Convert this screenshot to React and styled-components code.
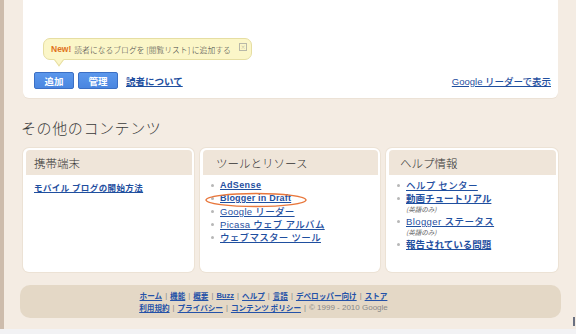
import React from "react";
import styled, { createGlobalStyle } from "styled-components";

const Global = createGlobalStyle`
  html, body { margin: 0; padding: 0; }
  body { width: 576px; height: 334px; overflow: hidden; background: #f4ece3;
    font-family: "Noto Sans CJK JP", "Liberation Sans", sans-serif; }
`;

const Page = styled.div`
  display: flex;
  width: 576px;
  height: 334px;
  background: #f4ece3;
  position: relative;
`;

const LeftStrip = styled.div`
  width: 4px;
  flex: 0 0 4px;
  height: 329px;
  background: #cdbcac;
`;

const Main = styled.div`
  flex: 1;
  display: flex;
  flex-direction: column;
  padding: 0 18px 0 19px;
`;

const TopPanel = styled.div`
  height: 98px;
  box-sizing: border-box;
  background: #fff;
  border-radius: 0 0 6px 6px;
  padding: 38px 7px 0 11px;
  display: flex;
  flex-direction: column;
  box-shadow: 0 1px 0 #ece2d6;
`;

const Tip = styled.div`
  position: relative;
  align-self: flex-start;
  margin-left: 9px;
  width: 209px;
  height: 22px;
  box-sizing: border-box;
  background: #fbf6c8;
  border: 1px solid #e6dea2;
  border-radius: 7px;
  display: flex;
  align-items: center;
  padding: 0 0 0 7px;
  font-size: 7.8px;
  font-weight: 300;
  color: #444;
  white-space: nowrap;
  &::after {
    content: "";
    position: absolute;
    left: 11px;
    bottom: -5px;
    width: 7px;
    height: 7px;
    background: #fbf6c8;
    border-right: 1px solid #e6dea2;
    border-bottom: 1px solid #e6dea2;
    transform: rotate(45deg) skew(8deg, 8deg);
  }
`;

const NewTag = styled.span`
  color: #e0731c;
  font-weight: bold;
  font-family: "Liberation Sans", sans-serif;
  font-size: 8.5px;
  margin-right: 3px;
`;

const TipClose = styled.span`
  position: absolute;
  right: 4px;
  top: 4px;
  width: 6px;
  height: 6px;
  border: 1px solid #b8b8a8;
  color: #a0a090;
  font-size: 6px;
  line-height: 6px;
  text-align: center;
  font-family: "DejaVu Sans", sans-serif;
`;

const ActionRow = styled.div`
  margin-top: 12px;
  display: flex;
  align-items: center;
  gap: 4px;
`;

const BlueButton = styled.button`
  width: 40px;
  height: 17px;
  padding: 0;
  border: 1px solid #3b6fc4;
  border-radius: 2px;
  background: linear-gradient(#5b97ec, #4a86e0);
  color: #fff;
  font-weight: bold;
  font-size: 9.5px;
  font-family: "Noto Sans CJK JP", sans-serif;
`;

const LinkA = styled.a`
  color: ${(p) => p.$color || "#1f4f9f"};
  text-decoration: underline;
  font-size: ${(p) => p.$size || "9.5px"};
  font-weight: ${(p) => p.$weight || 500};
  font-family: ${(p) => (p.$latin ? '"Liberation Sans", "Noto Sans CJK JP", sans-serif' : '"Noto Sans CJK JP", sans-serif')};
  letter-spacing: ${(p) => p.$ls || "0"};
  cursor: pointer;
`;

const ActionLink = styled(LinkA)`
  margin-left: 4px;
`;

const Spacer = styled.div`
  flex: 1;
`;

const Heading = styled.h2`
  margin: 20px 0 0 -2px;
  font-size: 15px;
  line-height: 20px;
  font-weight: 300;
  letter-spacing: 0.6px;
  color: #3a3a3a;
`;

const Cards = styled.div`
  margin-top: 10px;
  display: grid;
  grid-template-columns: 171px 180px 172px;
  column-gap: 6px;
  height: 124px;
`;

const Card = styled.div`
  background: #fff;
  border-radius: 6px;
  padding: 2px 2px 0 3px;
  box-sizing: border-box;
  box-shadow: 0 0 0 1px #ece2d5;
  position: relative;
`;

const CardHead = styled.div`
  height: 25px;
  background: #efe5d9;
  border-radius: 4px 4px 0 0;
  display: flex;
  align-items: center;
  padding-left: ${(p) => p.$pad || "8px"};
  font-size: 11.5px;
  font-weight: 300;
  color: #333;
`;

const CardBody = styled.div`
  padding: 6px 0 0 8px;
  font-size: 9px;
  line-height: 13px;
`;

const List = styled.ul`
  list-style: none;
  margin: 0;
  padding: 4px 0 0 8px;
`;

const Item = styled.li`
  display: flex;
  align-items: flex-start;
  line-height: 13px;
  &::before {
    content: "";
    width: 3px;
    height: 3px;
    border-radius: 50%;
    background: #b7b7b7;
    margin: 5px 6px 0 0;
    flex: 0 0 3px;
  }
`;

const ItemText = styled.div`
  display: flex;
  flex-direction: column;
`;

const Note = styled.span`
  font-size: 6.5px;
  line-height: 8px;
  font-style: italic;
  color: #555;
  margin-bottom: 2px;
`;

const Ellipse = styled.svg`
  position: absolute;
  left: 4px;
  top: 44px;
  pointer-events: none;
`;

const Footer = styled.div`
  margin-top: 13px;
  height: 33px;
  background: #e4d8c6;
  border-radius: 10px;
  margin-left: -3px;
  margin-right: -3px;
  display: flex;
  flex-direction: column;
  align-items: center;
  justify-content: center;
  padding-right: 54px;
`;

const FootLine = styled.div`
  display: flex;
  align-items: center;
  line-height: 12px;
  white-space: nowrap;
`;

const Sep = styled.span`
  color: #888;
  font-size: 7.5px;
  margin: 0 3px;
  font-family: "Liberation Sans", sans-serif;
`;

const Copy = styled.span`
  color: #888;
  font-size: 8px;
  font-family: "Liberation Sans", sans-serif;
`;

const BottomStrip = styled.div`
  position: absolute;
  left: 0;
  right: 0;
  bottom: 0;
  height: 5px;
  background: #f2f2f4;
`;

const Mark = styled.div`
  position: absolute;
  right: 1px;
  top: 317px;
  width: 2px;
  height: 9px;
  background: #6a7080;
`;

const FL = ({ children, latin }) => (
  <LinkA $size="7.6px" $weight={700} $latin={latin} $color="#2452a8">{children}</LinkA>
);

export default function App() {
  const foot1 = ["ホーム", "機能", "概要", "Buzz", "ヘルプ", "言語", "デベロッパー向け", "ストア"];
  const foot2 = ["利用規約", "プライバシー", "コンテンツ ポリシー"];
  return (
    <Page>
      <Global />
      <LeftStrip />
      <Main>
        <TopPanel>
          <Tip>
            <NewTag>New!</NewTag>
            読者になるブログを [閲覧リスト] に追加する
            <TipClose>×</TipClose>
          </Tip>
          <ActionRow>
            <BlueButton>追加</BlueButton>
            <BlueButton>管理</BlueButton>
            <ActionLink $weight={700}>読者について</ActionLink>
            <Spacer />
            <LinkA $latin $size="9.5px" $weight={500}>Google リーダーで表示</LinkA>
          </ActionRow>
        </TopPanel>
        <Heading>その他のコンテンツ</Heading>
        <Cards>
          <Card>
            <CardHead>携帯端末</CardHead>
            <CardBody>
              <LinkA $size="8.5px" $weight={700} $ls="0.4px">モバイル ブログの開始方法</LinkA>
            </CardBody>
          </Card>
          <Card>
            <CardHead $pad="13px">ツールとリソース</CardHead>
            <List>
              <Item><LinkA $latin $size="9px" $weight={700} $ls="0.4px">AdSense</LinkA></Item>
              <Item><LinkA $latin $size="9px" $weight={700} $ls="0.2px">Blogger in Draft</LinkA></Item>
              <Item><LinkA $latin $size="9.5px" $ls="0.3px">Google リーダー</LinkA></Item>
              <Item><LinkA $latin $size="9.5px" $ls="0.3px">Picasa ウェブ アルバム</LinkA></Item>
              <Item><LinkA $latin $size="9.5px" $ls="0.3px">ウェブマスター ツール</LinkA></Item>
            </List>
            <Ellipse width="104" height="16" viewBox="0 0 104 16">
              <ellipse cx="52" cy="8" rx="50" ry="6.5" fill="none" stroke="#e8773c" strokeWidth="1.4" />
            </Ellipse>
          </Card>
          <Card>
            <CardHead $pad="11px">ヘルプ情報</CardHead>
            <List>
              <Item><LinkA $size="9.5px" $ls="0.4px">ヘルプ センター</LinkA></Item>
              <Item>
                <ItemText>
                  <LinkA $size="9.5px" $weight={700}>動画チュートリアル</LinkA>
                  <Note>(英語のみ)</Note>
                </ItemText>
              </Item>
              <Item>
                <ItemText>
                  <LinkA $latin $size="9.5px" $ls="0.4px">Blogger ステータス</LinkA>
                  <Note>(英語のみ)</Note>
                </ItemText>
              </Item>
              <Item><LinkA $size="9.5px" $weight={700}>報告されている問題</LinkA></Item>
            </List>
          </Card>
        </Cards>
        <Footer>
          <FootLine>
            {foot1.map((t, i) => (
              <React.Fragment key={t}>
                {i > 0 && <Sep>|</Sep>}
                <FL latin={t === "Buzz"}>{t}</FL>
              </React.Fragment>
            ))}
          </FootLine>
          <FootLine>
            {foot2.map((t, i) => (
              <React.Fragment key={t}>
                {i > 0 && <Sep>|</Sep>}
                <FL>{t}</FL>
              </React.Fragment>
            ))}
            <Sep>|</Sep>
            <Copy>© 1999 - 2010 Google</Copy>
          </FootLine>
        </Footer>
      </Main>
      <BottomStrip />
      <Mark />
    </Page>
  );
}
